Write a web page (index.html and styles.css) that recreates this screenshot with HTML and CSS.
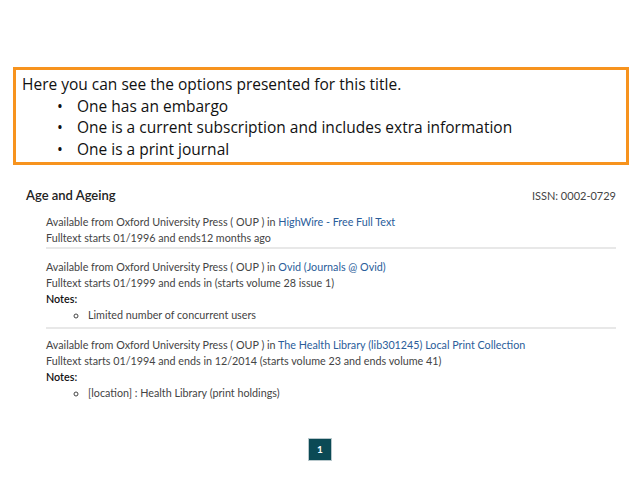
FILE: index.html
```html
<!DOCTYPE html>
<html lang="en">
<head>
    <meta charset="UTF-8">
    <title>Age and Ageing - options</title>
    <link rel="stylesheet" href="styles.css">
</head>
<body>
    <div class="callout">
        <p>Here you can see the options presented for this title.</p>
        <ul>
            <li>One has an embargo</li>
            <li>One is a current subscription and includes extra information</li>
            <li>One is a print journal</li>
        </ul>
    </div>

    <div class="title-row">
        <h3>Age and Ageing</h3>
        <span class="issn">ISSN: 0002-0729</span>
    </div>

    <div class="holdings">
        <div class="holding">
            <div>Available from Oxford University Press ( OUP ) in <a href="#">HighWire - Free Full Text</a></div>
            <div>Fulltext starts 01/1996 and ends12 months ago</div>
        </div>
        <div class="holding">
            <div>Available from Oxford University Press ( OUP ) in <a href="#">Ovid (Journals @ Ovid)</a></div>
            <div>Fulltext starts 01/1999 and ends in (starts volume 28 issue 1)</div>
            <div class="notes">Notes:</div>
            <ul>
                <li>Limited number of concurrent users</li>
            </ul>
        </div>
        <div class="holding">
            <div>Available from Oxford University Press ( OUP ) in <a href="#">The Health Library (lib301245) Local Print Collection</a></div>
            <div>Fulltext starts 01/1994 and ends in 12/2014 (starts volume 23 and ends volume 41)</div>
            <div class="notes">Notes:</div>
            <ul>
                <li>[location] : Health Library (print holdings)</li>
            </ul>
        </div>
    </div>

    <div class="pager">
        <a href="#" class="page">1</a>
    </div>
</body>
</html>
```

FILE: styles.css
```css
* {
    margin: 0;
    padding: 0;
}

body {
    background-color: white;
    font-family: Lato, "Open Sans", sans-serif;
    color: #444;
    width: 640px;
}

.callout {
    margin: 67px 11px 0 13px;
    height: 92px;
    border: 3px solid #f7931e;
    padding: 0 0 0 6px;
    font-family: "Open Sans", sans-serif;
    font-size: 15.5px;
    line-height: 21.5px;
    color: #111;
}

.callout p {
    margin-top: 4px;
}

.callout ul {
    list-style: none;
}

.callout li {
    padding-left: 55px;
    position: relative;
}

.callout li::before {
    content: "•";
    position: absolute;
    left: 35px;
}

.title-row {
    display: flex;
    justify-content: space-between;
    align-items: center;
    margin: 22px 24px 0 26px;
}

.title-row h3 {
    font-size: 13px;
    font-weight: 600;
    color: #222;
}

.issn {
    font-size: 11px;
}

.holdings {
    margin: 10px 24px 0 46px;
    font-size: 10.75px;
    line-height: 16px;
}

.holding {
    padding: 1px 0 1px;
    border-bottom: 2px solid #e8e8e8;
}

.holding + .holding {
    padding-top: 10px;
}

.holding:last-child {
    padding-top: 8px;
    border-bottom: none;
}

.holding a {
    color: #2a5d9a;
    text-decoration: none;
}

.notes {
    font-weight: 600;
    color: #111;
}

.holding ul {
    list-style: circle;
    margin: 0 0 3px 42px;
}

.pager {
    display: flex;
    justify-content: center;
    margin-top: 33px;
}

.page {
    display: block;
    width: 22px;
    height: 21px;
    line-height: 21px;
    text-align: center;
    background-color: #0b4a55;
    border: 1px solid #b8c8cc;
    color: white;
    font-size: 10px;
    font-weight: 700;
    text-decoration: none;
}
```
